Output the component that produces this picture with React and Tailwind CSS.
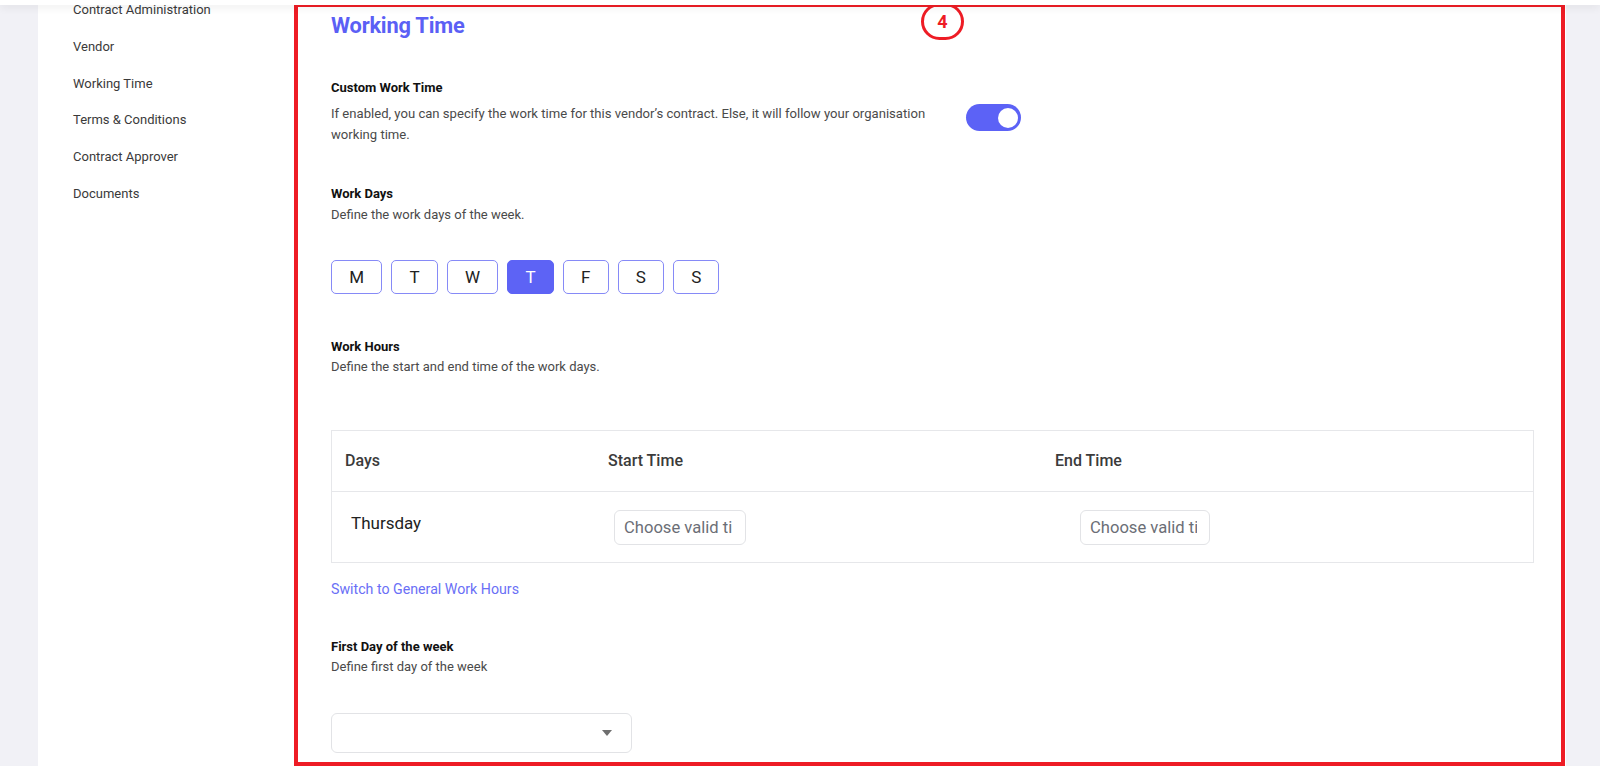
import React from "react";

const navItems = [
  "Contract Administration",
  "Vendor",
  "Working Time",
  "Terms & Conditions",
  "Contract Approver",
  "Documents",
];

const days = ["M", "T", "W", "T", "F", "S", "S"];

function Section({ title, children, className = "" }) {
  return (
    <div className={className}>
      <div className="text-[13px] leading-[20px] font-bold text-[#111]">{title}</div>
      {children}
    </div>
  );
}

export default function App() {
  return (
    <div className="relative w-[1600px] h-[766px] overflow-hidden bg-[#f1f1f6] font-['Roboto','Liberation_Sans',sans-serif]">
      {/* top header bar (scrolled off) */}
      <div className="relative z-10 h-[5px] bg-white shadow-[0_2px_8px_rgba(0,0,0,0.09)]" />

      <div className="flex h-[761px]">
        <div className="w-[38px] shrink-0" />
        <div className="flex flex-1 bg-white overflow-hidden">
          {/* sidebar */}
          <aside className="w-[260px] shrink-0 pl-[35px]">
            <ul className="-mt-[5px] flex flex-col gap-[16.8px]">
              {navItems.map((item) => (
                <li key={item} className="text-[13px] leading-[20px] text-[#3a3a3a]">
                  {item}
                </li>
              ))}
            </ul>
          </aside>

          {/* main */}
          <main className="flex-1 pl-[33px] pr-[32px] pt-[7px]">
            <h1 className="text-[21.8px] leading-[28px] font-bold text-[#5b5ff5] tracking-[-0.2px]">
              Working Time
            </h1>

            <Section title="Custom Work Time" className="mt-[38px]">
              <div className="mt-[5px] flex items-start">
                <p className="w-[610px] text-[13.1px] leading-[21px] text-[#4a4a4a]">
                  If enabled, you can specify the work time for this vendor’s contract. Else, it will follow your organisation
                  <br />
                  working time.
                </p>
                <button className="ml-[25px] mt-[1px] flex h-[27px] w-[55px] items-center justify-end rounded-full bg-[#5c62f6] pr-[3px]">
                  <span className="h-[20px] w-[20px] rounded-full bg-white" />
                </button>
              </div>
            </Section>

            <Section title="Work Days" className="mt-[39px]">
              <p className="mt-[1px] text-[13px] leading-[20px] text-[#4a4a4a]">
                Define the work days of the week.
              </p>
              <div className="mt-[35px] flex gap-[9px]">
                {days.map((d, i) => (
                  <button
                    key={i}
                    className={
                      i === 3
                        ? "h-[34px] rounded-[5px] border border-[#5d63f5] bg-[#5d63f5] px-[17.2px] text-[17px] leading-[32px] text-white"
                        : "h-[34px] rounded-[5px] border border-[#868af7] bg-white px-[17.2px] text-[17px] leading-[32px] text-[#222]"
                    }
                  >
                    {d}
                  </button>
                ))}
              </div>
            </Section>

            <Section title="Work Hours" className="mt-[43px]">
              <p className="mt-0 text-[13px] leading-[20px] text-[#4a4a4a]">
                Define the start and end time of the work days.
              </p>
            </Section>

            <div className="mt-[53px] w-full border border-[#e6e7ea]">
              <div className="grid h-[61px] grid-cols-[263px_447px_1fr] items-center border-b border-[#e6e7ea] text-[16px] font-medium text-[#3b3b3b]">
                <div className="pl-[13px]">Days</div>
                <div className="pl-[13px]">Start Time</div>
                <div className="pl-[13px]">End Time</div>
              </div>
              <div className="grid h-[70px] grid-cols-[263px_447px_1fr] items-center">
                <div className="pl-[19px] pb-[7px] text-[17px] text-[#222]">Thursday</div>
                <div className="pl-[19px]">
                  <input
                    readOnly
                    placeholder="Choose valid time"
                    className="h-[35px] w-[132px] rounded-[6px] border border-[#e2e3e6] pl-[9px] pr-[13px] text-[16.6px] text-[#333] placeholder:text-[#6b6e76] outline-none"
                  />
                </div>
                <div className="pl-[38px]">
                  <input
                    readOnly
                    placeholder="Choose valid time"
                    className="h-[35px] w-[130px] rounded-[6px] border border-[#e2e3e6] pl-[9px] pr-[12px] text-[16.6px] text-[#333] placeholder:text-[#6b6e76] outline-none"
                  />
                </div>
              </div>
            </div>

            <a className="mt-[16px] block text-[14.2px] leading-[20px] text-[#6a6ff6]">
              Switch to General Work Hours
            </a>

            <Section title="First Day of the week" className="mt-[38px]">
              <p className="text-[13px] leading-[20px] text-[#4a4a4a]">Define first day of the week</p>
              <div className="mt-[36px] flex h-[40px] w-[301px] items-center justify-end rounded-[6px] border border-[#e2e3e6] pr-[19px]">
                <svg width="10" height="6" viewBox="0 0 10 6">
                  <path d="M0 0 L10 0 L5 6 Z" fill="#6f6f6f" />
                </svg>
              </div>
            </Section>
          </main>
        </div>
        <div className="w-[34px] shrink-0" />
      </div>

      {/* annotation overlay */}
      <div className="pointer-events-none absolute left-[294px] top-[3px] h-[763px] w-[1271px] border-[4px] border-[#ee1c25]" />
      <div className="pointer-events-none absolute left-[921px] top-[3px] flex h-[37px] w-[43px] items-center justify-center rounded-full border-[3px] border-[#ee1c25] text-[18px] font-bold leading-none text-[#ee1c25]">
        4
      </div>
    </div>
  );
}
